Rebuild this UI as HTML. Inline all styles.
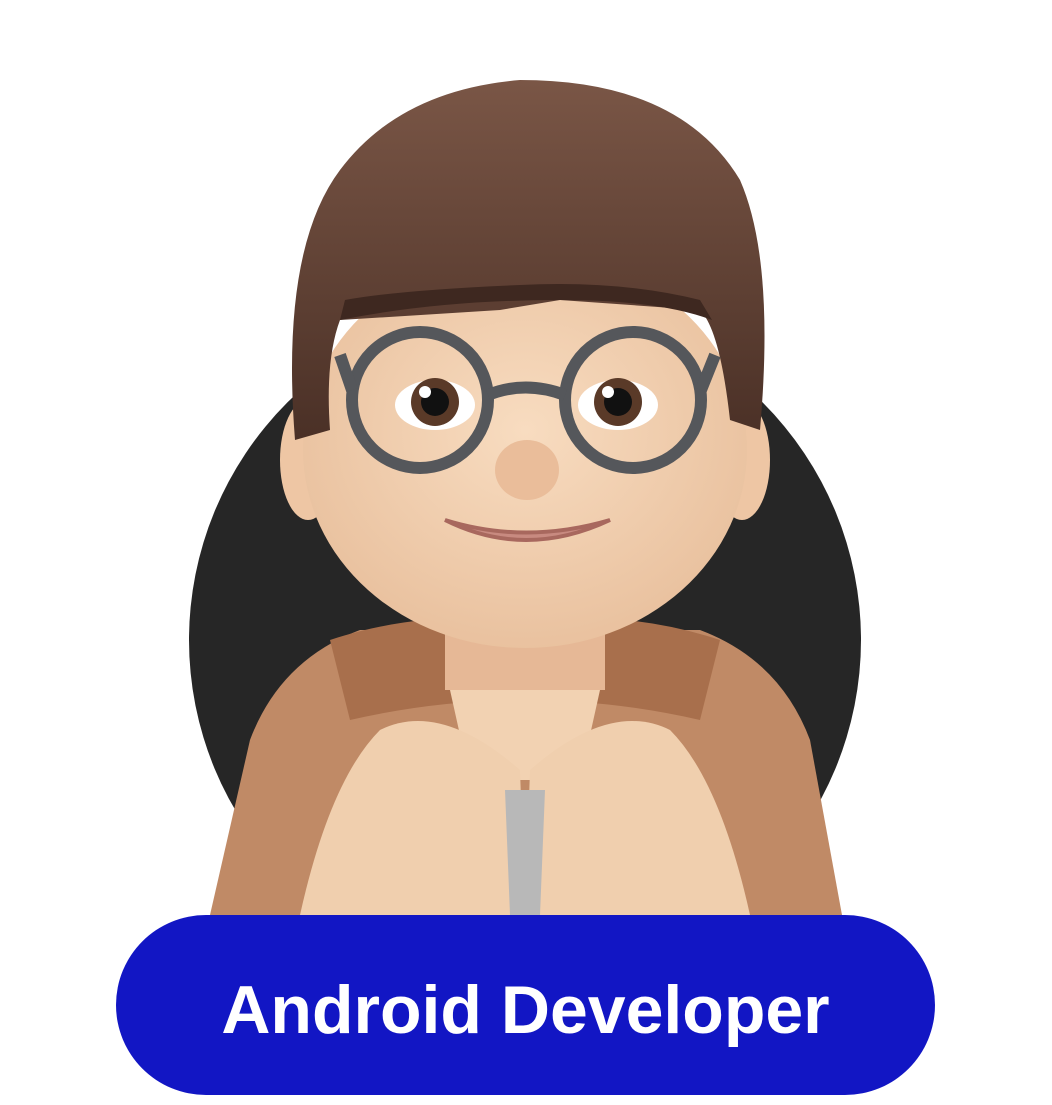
<!DOCTYPE html>
<html><head><style>
html,body{margin:0;padding:0;background:#fff;}
body{width:1052px;height:1096px;position:relative;overflow:hidden;}
.pill{position:absolute;left:116px;top:915px;width:819px;height:180px;border-radius:90px;background:#1216c4;color:#fff;font-family:"Liberation Sans",sans-serif;font-weight:bold;font-size:68px;line-height:190px;text-align:center;}
svg{position:absolute;left:0;top:0;}
</style></head><body>
<svg width="1052" height="1096" viewBox="0 0 1052 1096">
<defs>
<radialGradient id="sk" cx="50%" cy="45%" r="60%"><stop offset="0" stop-color="#f8dcc0"/><stop offset="1" stop-color="#e8bf9c"/></radialGradient>
<linearGradient id="hr" x1="0" y1="0" x2="0" y2="1"><stop offset="0" stop-color="#7a5646"/><stop offset="1" stop-color="#4a3026"/></linearGradient>
</defs>
<circle cx="525" cy="640" r="336" fill="#262626"/>
<path d="M210 915 L250 740 Q280 660 360 630 L700 630 Q780 660 810 740 L842 915 Z" fill="#c08a66"/>
<path d="M330 640 Q420 610 525 620 Q630 610 720 640 L700 720 Q525 680 350 720 Z" fill="#a86f4c"/>
<path d="M450 690 L600 690 L580 780 L470 780 Z" fill="#f2d2b2"/>
<rect x="445" y="580" width="160" height="110" fill="#e6b896"/>
<ellipse cx="308" cy="460" rx="28" ry="60" fill="#eec6a4"/>
<ellipse cx="742" cy="460" rx="28" ry="60" fill="#eec6a4"/>
<ellipse cx="525" cy="450" rx="222" ry="198" fill="url(#sk)"/>
<path d="M295 440 Q280 250 340 170 Q400 90 520 80 Q680 80 740 180 Q775 260 760 430 L730 420 Q720 330 700 310 L560 300 L500 310 L340 320 Q325 360 330 430 Z" fill="url(#hr)"/>
<path d="M340 320 Q440 300 560 300 Q660 300 712 320 L700 300 Q620 280 520 285 Q400 290 345 300 Z" fill="#3e2820"/>
<g fill="none" stroke="#55575b" stroke-width="12">
<circle cx="420" cy="400" r="68"/>
<circle cx="633" cy="400" r="68"/>
<path d="M488 395 Q525 380 565 395"/>
<path d="M352 390 L340 355 M701 390 L715 355"/>
</g>
<ellipse cx="435" cy="405" rx="40" ry="25" fill="#fff"/>
<ellipse cx="618" cy="405" rx="40" ry="25" fill="#fff"/>
<circle cx="435" cy="402" r="24" fill="#5a3a28"/>
<circle cx="618" cy="402" r="24" fill="#5a3a28"/>
<circle cx="435" cy="402" r="14" fill="#111"/>
<circle cx="618" cy="402" r="14" fill="#111"/>
<circle cx="425" cy="392" r="6" fill="#fff"/>
<circle cx="608" cy="392" r="6" fill="#fff"/>
<ellipse cx="527" cy="470" rx="32" ry="30" fill="#eabd9a"/>
<path d="M445 520 Q525 560 610 520 Q525 545 445 520 Z" fill="#c88a80" stroke="#a8685e" stroke-width="4"/>
<path d="M300 915 Q330 780 380 730 Q440 700 520 770 L525 915 Z" fill="#f0cfae"/>
<path d="M750 915 Q720 780 670 730 Q610 700 530 770 L525 915 Z" fill="#f0cfae"/>
<path d="M505 790 L545 790 L540 915 L510 915 Z" fill="#b8b8b8"/>
</svg>
<div class="pill">Android Developer</div>
</body></html>
